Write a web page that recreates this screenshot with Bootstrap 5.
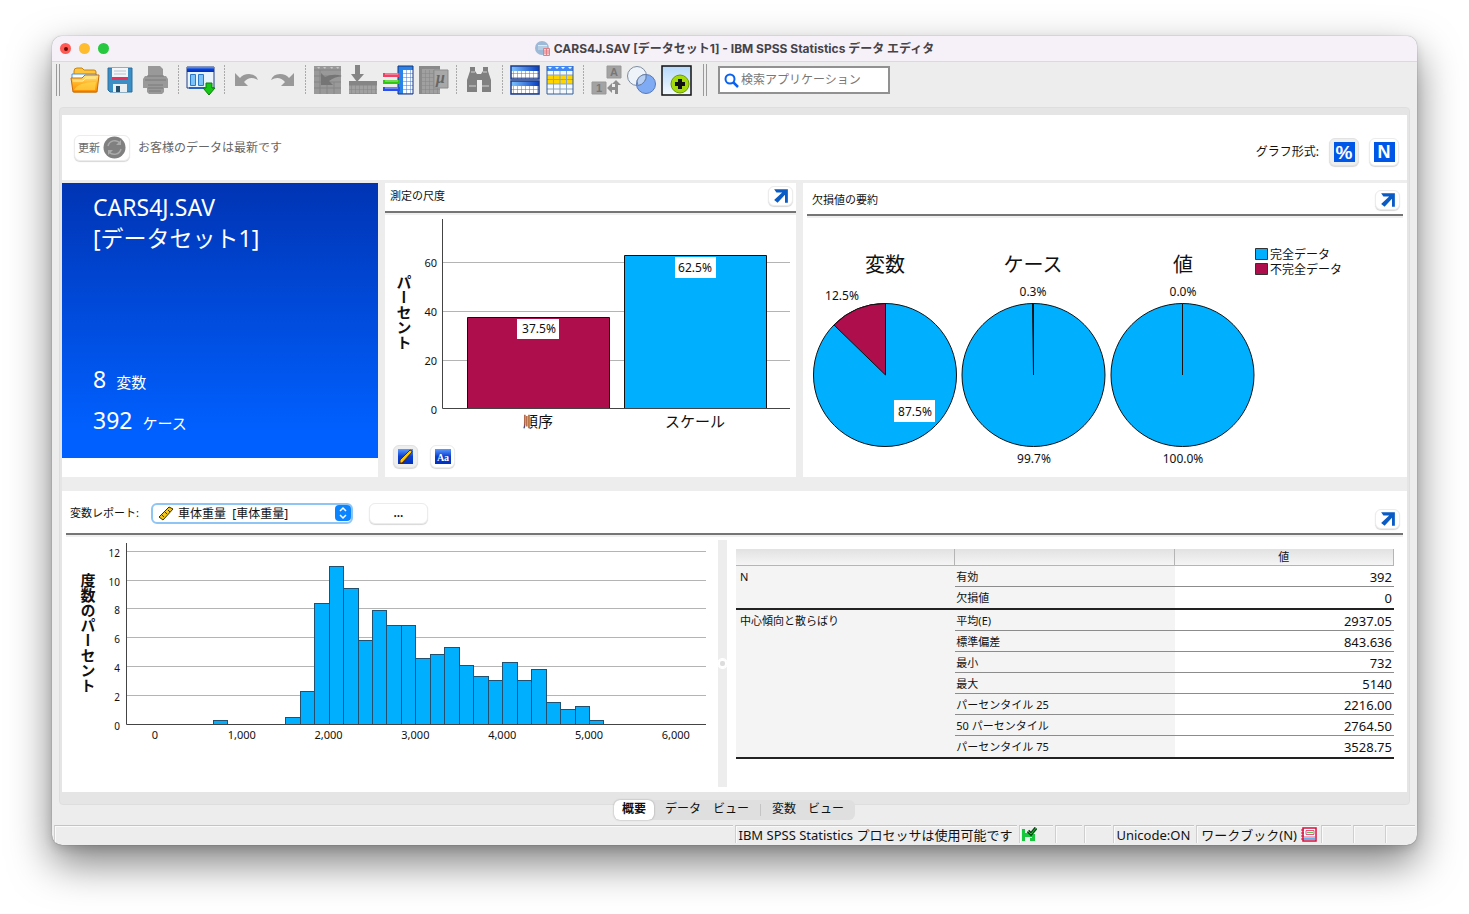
<!DOCTYPE html>
<html lang="ja">
<head>
<meta charset="utf-8">
<meta name="viewport" content="width=device-width, initial-scale=1">
<title>CARS4J.SAV [データセット1] - IBM SPSS Statistics データ エディタ</title>
<link href="https://cdn.jsdelivr.net/npm/bootstrap@5.3.0/dist/css/bootstrap.min.css" rel="stylesheet">
<style>
body { background: #fff; font-family: "Noto Sans", "Noto Sans CJK JP", sans-serif; font-size: 12px; line-height: 16px; color: #111; padding: 36px 52px 69px; min-height: 100vh; }
.app-window { min-height: calc(100vh - 105px); background: #ededed; border-radius: 10px; overflow: hidden; box-shadow: 0 0 1px rgba(0,0,0,.6), 0 18px 42px rgba(0,0,0,.5), 0 4px 10px rgba(0,0,0,.12); }
.title-bar { height: 26px; background: #f6f1f8; border-bottom: 1px solid #dcd8de; padding: 0 8px; font: bold 12px/24px Inter, "Noto Sans CJK JP", sans-serif; color: #464348; }
.light { width: 11px; height: 11px; border-radius: 50%; border: 0; padding: 0; margin-right: 8px; display: flex; align-items: center; justify-content: center; }
.light-close { background: #ff5b54; } .light-min { background: #febc2e; } .light-zoom { background: #28c840; }
.title-side { flex: 1 1 0; }
.tool-bar { height: 45px; gap: 3px; padding: 0 4px 9px; }
.tool-btn { width: 32px; height: 32px; border: 0; background: none; padding: 0; display: flex; align-items: center; justify-content: center; }
.tool-btn svg, .title-bar svg { display: block; }
.tool-sep { width: 8px; height: 30px; background: radial-gradient(#aaa, #aaa) center/1px 100% no-repeat; -webkit-mask: repeating-linear-gradient(#000 0 2px, transparent 2px 3px); }
.grip { width: 4px; height: 32px; border: solid #9a9a9a; border-width: 0 1px; }
.grip-start { margin-right: 6px; }
.search-box { width: 172px; height: 28px; border: 2px solid #919191; background: #fff; padding: 0 4px; gap: 2px; }
.search-box input { border: 0; outline: 0; padding: 0; width: 100%; font-size: 12px; background: none; }
.search-box input::placeholder { color: #777; opacity: 1; }
.pane { margin: 0 7px; padding: 7px 2px 12px; border: 1px solid #dedede; background: #e5e5e5; border-radius: 4px; }
.pane-inner { background: #ededed; }
.head-row { height: 65px; padding: 0 8px 0 12px; margin-bottom: 3px; }
.soft-btn { border: 1px solid #ececec; border-radius: 6px; background: #fff; box-shadow: 0 1px 1px rgba(0,0,0,.16); padding: 0; display: inline-flex; align-items: center; justify-content: center; color: #111; font-size: 12px; }
.soft-btn.active { background: #eee; border-color: #e2e2e2; }
.btn-refresh { width: 56px; height: 26px; gap: 3px; color: #6a6a6a; font-size: 11px; }
.btn-format { width: 30px; height: 28px; }
.btn-open { width: 25px; height: 20px; }
.btn-mini { width: 25px; height: 23px; }
.btn-more { width: 59px; height: 21px; font-weight: 600; }
.note { color: #666; }
.format-pair { gap: 10px; }
.top-grid { display: grid; grid-template-columns: 316fr 411fr 604fr; column-gap: 7px; margin-bottom: 14px; }
.blue-box { height: 275px; padding: 9px 31px 14px; color: #fff; background: linear-gradient(#0034b4, #0060ff 90%); }
.file-name { font-size: 23px; line-height: 31px; }
.count-row { font-size: 15px; line-height: 41px; height: 41px; }
.count-row span { font-size: 23px; line-height: 24px; margin-right: 10px; }
.panel-title { font-size: 11px; }
.rule { border-bottom: 2px solid #757575; box-shadow: 0 2px 0 #efefef; }
.measure-head { height: 30px; padding: 0 3px 2px 5px; }
.missing-head { height: 33px; margin: 0 4px; padding: 3px 3px 0 5px; }
.report-head { height: 44px; margin: 0 4px; padding: 2px 3px 0 4px; }
.open-report { margin: 12px 0 0 auto; }
.chart { display: block; width: 100%; height: auto; }
.chart text { fill: #111; }
.s11 { font-size: 11px; } .s12 { font-size: 12px; } .s15 { font-size: 15px; } .s20 { font-size: 20px; } .s10 { font-size: 10px; }
.mid { text-anchor: middle; } .fin { text-anchor: end; }
.axis-name { font-size: 15px; font-weight: 700; writing-mode: vertical-rl; font-family: "Noto Sans CJK JP", sans-serif; }
.var-select { width: 202px; height: 21px; border: 2px solid #8ec5f5; border-radius: 6px; background: #fff; padding: 0 0 0 5px; gap: 4px; }
.var-select select { appearance: none; border: 0; outline: 0; background: none; padding: 0; flex: 1; font-size: 12px; line-height: 17px; color: #111; }
.split-grid { display: grid; grid-template-columns: 656fr 9px 680fr; padding-top: 5px; }
.splitter { background: #ededed; height: 247px; display: flex; align-items: center; }
.splitter span { width: 9px; height: 9px; border: 2px solid #fff; background: #ddd; border-radius: 4px; outline: 1px solid #fff; }
.stat-table { width: calc(100% - 22px); margin: 9px 13px 0 9px; table-layout: fixed; font-size: 11px; line-height: 14px; border-collapse: separate; border-spacing: 0; }
.stat-table thead th { height: 17px; padding: 0; font-weight: 400; text-align: center; background: linear-gradient(#e2e2e2, #f5f5f5); border-bottom: 1px solid #b5b5b5; border-right: 1px solid #b5b5b5; }
.stat-table tbody th { background: #f4f4f4; font-weight: 400; vertical-align: top; padding: 4px 4px 0; }
.stat-table tbody th + th, .stat-table .sub { padding-left: 1px; }
.stat-table tbody td { text-align: right; padding: 4px 2px 0; vertical-align: top; font-size: 13px; }
.stat-table tbody tr { height: 21px; }
.stat-table tbody tr > * { border-bottom: 1px solid #8c8c8c; }
.stat-table tr.last-row { height: 23px; }
.stat-table tr.last-row > *, .stat-table th.grp { border-bottom: 2px solid #222; }
.view-tabs { margin-top: -5px; height: 20px; background: #dfdfdf; border-radius: 6px; position: relative; }
.view-tabs button { border: 0; background: none; padding: 0 11px; height: 20px; font-size: 12px; line-height: 18px; padding-bottom: 2px; color: #111; }
.view-tabs button.active { background: #fff; border-radius: 6px; padding: 0 8px 2px; font-weight: 700; box-shadow: 0 0 2px rgba(0,0,0,.35); }
.tab-line { width: 1px; height: 12px; background: #c4c4c4; }
.status-bar { margin: 5px 2px 1px; height: 19px; font-size: 13px; }
.stat-cell { border: solid #cfcfcf; border-width: 1px 0 0 1px; border-top-color: #c4c4c4; box-shadow: inset 1px 1px 0 #fafafa; margin-left: 2px; height: 18px; padding: 0 2px; white-space: nowrap; display: flex; align-items: center; gap: 4px; }
.cell-msg { padding-right: 5px; }
.w-30 { width: 30px; } .w-27 { width: 27px; } .w-34 { width: 34px; }
</style>
</head>
<body>
<svg width="0" height="0" class="position-absolute" aria-hidden="true">
  <defs>
    <linearGradient id="gBlue" x1="0" x2="1"><stop offset="0" stop-color="#7fc4ff"/><stop offset="1" stop-color="#0a3fc0"/></linearGradient>
    <linearGradient id="gFold" x2="0" y2="1"><stop offset="0" stop-color="#ffe98a"/><stop offset=".5" stop-color="#ffb224"/><stop offset="1" stop-color="#ff8a00"/></linearGradient>
    <linearGradient id="gSky" x2="0" y2="1"><stop offset="0" stop-color="#b5d8fa"/><stop offset="1" stop-color="#f4faff"/></linearGradient>
    <linearGradient id="gDeep" x2="0" y2="1"><stop offset="0" stop-color="#5d9bff"/><stop offset=".5" stop-color="#0a3fd0"/><stop offset="1" stop-color="#0030c0"/></linearGradient>
    <symbol id="iOpen" viewBox="0 0 14 14"><path d="M1 1h12v12h-2.500V6L4 13 1 10.500 8 4H3z" fill="#0a5bc4"/></symbol>
    <pattern id="pCell" width="4" height="4" patternUnits="userSpaceOnUse"><path d="M0 0h4v4" fill="none" stroke="#3a78d8"/></pattern>
    <pattern id="pGrey" width="4" height="4" patternUnits="userSpaceOnUse"><path d="M0 0h4v4" fill="none" stroke="#858585"/></pattern>
  </defs>
</svg>
<main class="app-window d-flex flex-column">
  <header class="title-bar d-flex align-items-center">
    <div class="title-side d-flex">
      <button class="light light-close" aria-label="閉じる"><svg width="4" height="4"><circle cx="2" cy="2" r="2" fill="#6d0a05"/></svg></button>
      <button class="light light-min" aria-label="しまう"></button>
      <button class="light light-zoom" aria-label="拡大"></button>
    </div>
    <div class="d-flex align-items-center gap-1 text-nowrap">
      <svg width="15" height="15" viewBox="0 0 15 15"><circle cx="7" cy="7" r="7" fill="#9cb9d8"/><path d="M3 4h9v5H3z" fill="#dce9f5"/><path d="M3 6h9M3 8h9" stroke="#8fb0d0"/><path d="M8.500 7.500h6v7h-6z" fill="#f9d3d3" stroke="#e07f86"/><path d="M9 10h5M9 12h5M11.500 8v6" stroke="#e07f86"/></svg>
      <span>CARS4J.SAV [データセット1] - IBM SPSS Statistics データ エディタ</span>
    </div>
    <div class="title-side"></div>
  </header>

  <div class="tool-bar d-flex align-items-center" role="toolbar" aria-label="ツールバー">
    <span class="grip grip-start"></span>
    <button class="tool-btn" aria-label="開く"><svg width="30" height="28" viewBox="0 0 30 28"><path d="M4 26V5q0-3 3-3h5l2 2h10q2 0 2 2v20z" fill="#fcc53d" stroke="#c98310"/><path d="M2 8h24v6H2z" fill="#fff" stroke="#4a90d9"/><path d="M1 12h11l3-3h14l-2 17H3z" fill="url(#gFold)" stroke="#c66c08"/><path d="M3 15h10l3-3h10" fill="none" stroke="#fff2a8"/><path d="M4 24q4-8 22-8l-1 8z" fill="#ffdf55" opacity=".6"/></svg></button>
    <button class="tool-btn" aria-label="保存"><svg width="26" height="26" viewBox="0 0 26 26"><path d="M1 1h24v24H3l-2-2z" fill="#3b8ec4" stroke="#2a6f9f"/><path d="M5 1h16v10H5z" fill="#f3f6f8"/><path d="M7 4h12M7 7h12" stroke="#b9c4cc"/><path d="M5 10h16v3H5z" fill="#e8325c"/><path d="M6 17h14v8H6z" fill="#e9eef1"/><path d="M9 19h4v6H9z" fill="#24506e"/></svg></button>
    <button class="tool-btn" aria-label="印刷" disabled><svg width="27" height="30" viewBox="0 0 27 30"><path d="M6 1h12l3 3v7h3l2 3v9h-4v4l-2 2H7l-2-2v-4H1v-9l2-3h3z" fill="#999"/><path d="M5 11h17M3 15h21M6 20h15M6 23h15M7 26h12" stroke="#7a7a7a"/></svg></button>
    <span class="tool-sep"></span>
    <button class="tool-btn" aria-label="ダイアログ呼び戻し"><svg width="30" height="29" viewBox="0 0 30 29"><path d="M1 1h27v21H1z" fill="#e9f3fd" stroke="#1c3f86"/><path d="M1 1h27v5H1z" fill="url(#gDeep)"/><path d="M4.500 8.500h5v11h-5zM12.500 8.500h5v11h-5z" fill="#7cc2f8" stroke="#2b78c8"/><path d="M3 22h16" stroke="#2b62c0" stroke-width="2"/><path d="M20 17h6v5h3l-6 7-6-7h3z" fill="#15c615" stroke="#0c7d0c"/></svg></button>
    <span class="tool-sep"></span>
    <button class="tool-btn" aria-label="元に戻す" disabled><svg width="26" height="16" viewBox="0 0 26 16"><path d="M1 1v13h13l-4-4q6-7 14-2-2-6-9-6-6 0-9 4z" fill="#999"/></svg></button>
    <button class="tool-btn" aria-label="やり直し" disabled><svg width="26" height="16" viewBox="0 0 26 16"><path d="M25 1v13H12l4-4Q10 3 2 8q2-6 9-6 6 0 9 4z" fill="#999"/></svg></button>
    <span class="tool-sep"></span>
    <button class="tool-btn" aria-label="ケースへ移動" disabled><svg width="30" height="30" viewBox="0 0 30 30"><path d="M1 1h27v28H1z" fill="#999"/><path d="M1 5h27M1 11h27M1 17h27M1 23h27M7 5v24M14 17v12M21 17v12" stroke="#858585"/><path d="M8 8v12h12l-4-4q5-4 13-5-9-3-17 1z" fill="#757575"/><path d="M4 2h3l-1 2zM10 2h3l-1 2zM17 2h3l-1 2zM23 2h3l-1 2z" fill="#c8c8c8"/></svg></button>
    <button class="tool-btn" aria-label="変数へ移動" disabled><svg width="30" height="30" viewBox="0 0 30 30"><path d="M7 0h5v9h4L9 17 3 9h4z" fill="#858585"/><path d="M1 16h28v13H1z" fill="#a0a0a0"/><path d="M1 16h28v4H1z" fill="#858585"/><path d="M1 20h28v9H1z" fill="url(#pGrey)"/></svg></button>
    <button class="tool-btn" aria-label="変数"><svg width="31" height="30" viewBox="0 0 31 30"><path d="M15 1h15v28H15z" fill="#fff"/><path d="M15 5h15v24H15z" fill="url(#pCell)"/><path d="M15 1h15v4H15zM15 5h5v24h-5z" fill="#2a83e6"/><path d="M15 1h15v28H15z" fill="none" stroke="#12337f"/><path d="M0 8h17v4H0z" fill="#ef4265"/><path d="M0 15h17v4H0z" fill="#2fc80f"/><path d="M0 22h17v4H0z" fill="#2b50ea"/><path d="M2 9h13M2 16h13M2 23h13" stroke="#fff" opacity=".6"/></svg></button>
    <button class="tool-btn" aria-label="記述統計" disabled><svg width="31" height="30" viewBox="0 0 31 30"><path d="M1 1h21v28H1z" fill="#a0a0a0"/><path d="M1 5h21v24H1z" fill="url(#pGrey)"/><path d="M1 1h21v3H1zM1 4h3v25H1z" fill="#8a8a8a"/><path d="M16 5h14v18H16z" fill="#a8a8a8" stroke="#8d8d8d"/><text x="18" y="18" font-size="16" font-style="italic" font-weight="bold" font-family="Liberation Serif, serif" fill="#666">μ</text></svg></button>
    <span class="tool-sep"></span>
    <button class="tool-btn" aria-label="検索" disabled><svg width="26" height="28" viewBox="0 0 26 28"><path d="M4 1h5v4l2 3h4l2-3V1h5v4l3 9v12h-9V14h-5v12H1V14l3-9z" fill="#808080"/><path d="M3 20h7M16 20h7M5 6h4M17 6h4" stroke="#a9a9a9" stroke-width="2"/></svg></button>
    <span class="tool-sep"></span>
    <button class="tool-btn" aria-label="ケースの分割"><svg width="30" height="30" viewBox="0 0 30 30"><path d="M1 1h28v13H1zM1 16h28v13H1z" fill="#fff"/><path d="M1 6h28v8H1zM1 21h28v8H1z" fill="url(#pCell)"/><path d="M1 1h28v5H1zM1 16h28v5H1z" fill="url(#gBlue)"/><path d="M1 1h28v13H1zM1 16h28v13H1z" fill="none" stroke="#183b8e" stroke-width="1.500"/></svg></button>
    <button class="tool-btn" aria-label="ケースの選択"><svg width="28" height="30" viewBox="0 0 28 30"><path d="M1 1h26v28H1z" fill="#f5f9fd"/><path d="M1 1h26v5H1z" fill="#4288f2"/><path d="M1 10h26v9H1z" fill="#ffd500"/><path d="M7.500 6v23M14 6v23M20.500 6v23M1 14.500h26M1 10h26M1 19h26M1 24h26" stroke="#8aa5bd"/><path d="M2 2h4l-2 2zM9 2h4l-2 2zM15 2h4l-2 2zM22 2h4l-2 2z" fill="#fff"/><path d="M1 1v28h26V1" fill="none" stroke="#315d9c"/></svg></button>
    <span class="tool-sep"></span>
    <button class="tool-btn" aria-label="値ラベル" disabled><svg width="31" height="30" viewBox="0 0 31 30"><path d="M16 1h14v12H16zM1 17h14v12H1z" fill="#a3a3a3" stroke="#999"/><g font-size="11" font-weight="bold" font-family="Liberation Sans, sans-serif" fill="#777"><text x="19" y="11">A</text><text x="5" y="27">1</text></g><path d="M16 23l5-5v4h3v-3h-3l4-4 5 5h-3v9h-3v-4h-3v3z" fill="#8e8e8e"/></svg></button>
    <button class="tool-btn" aria-label="変数セット"><svg width="31" height="30" viewBox="0 0 31 30"><circle cx="11" cy="11" r="9.500" fill="#eef3fa" stroke="#7f8da0"/><circle cx="20" cy="19" r="9.500" fill="#6a9ff5" fill-opacity=".85" stroke="#5878b8"/><path d="M11 16a9.500 9.500 0 0 1 9-6.500 9.500 9.500 0 0 1-8 11z" fill="#b8d0f4" stroke="#6c7f9c"/></svg></button>
    <button class="tool-btn" aria-label="ツールバーのカスタマイズ"><svg width="31" height="31" viewBox="0 0 31 31"><path d="M1 1h29v29H1z" fill="url(#gSky)" stroke="#111" stroke-width="1.500"/><circle cx="19" cy="19" r="9" fill="#a4d90c" stroke="#6c9a00"/><path d="M17 14h4v3h3v4h-3v3h-4v-3h-3v-4h3z" fill="#111"/></svg></button>
    <span class="grip mx-2"></span>
    <div class="search-box d-flex align-items-center">
      <svg width="15" height="15" viewBox="0 0 15 15" class="flex-shrink-0"><circle cx="6" cy="6" r="4.500" fill="none" stroke="#0a62ee" stroke-width="2"/><path d="M9 9l5 5" stroke="#0a62ee" stroke-width="2.500"/></svg>
      <input type="search" placeholder="検索アプリケーション" aria-label="検索アプリケーション">
    </div>
  </div>

  <div class="pane flex-grow-1 d-flex flex-column">
    <div class="pane-inner flex-grow-1 d-flex flex-column">
      <div class="head-row bg-white d-flex align-items-center justify-content-between">
        <div class="d-flex align-items-center gap-2">
          <button class="soft-btn btn-refresh" disabled>更新 <svg width="23" height="23" viewBox="0 0 23 23"><circle cx="11.500" cy="11.500" r="11" fill="#808080"/><path d="M5 10a7 7 0 0 1 12-3M18 13a7 7 0 0 1-12 3" fill="none" stroke="#aaa" stroke-width="1.500"/><path d="M18 4v5h-5zM5 19v-5h5z" fill="#aaa"/></svg></button>
          <span class="note">お客様のデータは最新です</span>
        </div>
        <div class="d-flex align-items-center pt-2 format-pair">
          <span>グラフ形式:</span>
          <button class="soft-btn btn-format active" aria-label="パーセント"><svg width="21" height="20"><path d="M0 0h21v20H0z" fill="#0057e7"/><text x="10" y="17" class="mid" font-size="19" font-weight="bold" font-family="Liberation Sans, sans-serif" fill="#fff">%</text></svg></button>
          <button class="soft-btn btn-format" aria-label="度数"><svg width="21" height="20"><path d="M0 0h21v20H0z" fill="#0057e7"/><text x="10" y="16" class="mid" font-size="18" font-weight="bold" font-family="Liberation Sans, sans-serif" fill="#fff">N</text></svg></button>
        </div>
      </div>

      <div class="top-grid">
        <section class="bg-white">
          <div class="blue-box d-flex flex-column justify-content-between">
            <div class="file-name">CARS4J.SAV<br>[データセット1]</div>
            <div>
              <div class="count-row"><span>8</span>変数</div>
              <div class="count-row"><span>392</span>ケース</div>
            </div>
          </div>
        </section>

        <section class="bg-white">
          <div class="measure-head rule d-flex align-items-center justify-content-between">
            <span class="panel-title">測定の尺度</span>
            <button class="soft-btn btn-open" aria-label="測定の尺度を開く"><svg width="16" height="16"><use href="#iOpen"/></svg></button>
          </div>
          <svg class="chart" viewBox="0 -2 411 232" role="img" aria-label="測定の尺度">
            <path d="M57 47.500H405M57 96.500H405M57 145.500H405" stroke="#b4b4b4"/>
            <path d="M82.500 102.500h142v91h-142z" fill="#ae0e4c" stroke="#111"/>
            <path d="M239.500 40.500h142v153h-142z" fill="#00b0ff" stroke="#111"/>
            <path d="M57.500 4v189.500H405" fill="none" stroke="#444"/>
            <path d="M132 104h42v20h-42zM290 42h41v21h-41z" fill="#fff"/>
            <g class="s12 mid"><text x="154" y="118">37.5%</text><text x="310" y="57">62.5%</text></g>
            <g class="s11 fin"><text x="52" y="52">60</text><text x="52" y="101">40</text><text x="52" y="150">20</text><text x="52" y="199">0</text></g>
            <g class="s15 mid"><text x="153" y="212">順序</text><text x="310" y="212">スケール</text></g>
            <text class="axis-name" x="19" y="60">パーセント</text>
          </svg>
          <div class="d-flex px-2 gap-2">
            <button class="soft-btn btn-mini active me-1" aria-label="尺度"><svg width="15" height="15"><path d="M0 0h15v15H0z" fill="url(#gDeep)"/><path d="M2 11L12 1l2 1v1L4 14H2z" fill="#ffc800" stroke="#5a2a00"/></svg></button>
            <button class="soft-btn btn-mini" aria-label="ラベル"><svg width="16" height="15"><path d="M0 0h16v15H0z" fill="url(#gDeep)"/><text x="8" y="12" class="mid" font-size="10" font-weight="bold" font-family="Liberation Serif, serif" fill="#fff">Aa</text></svg></button>
          </div>
        </section>

        <section class="bg-white">
          <div class="missing-head rule d-flex align-items-center justify-content-between">
            <span class="panel-title">欠損値の要約</span>
            <button class="soft-btn btn-open" aria-label="欠損値の要約を開く"><svg width="16" height="16"><use href="#iOpen"/></svg></button>
          </div>
          <svg class="chart" viewBox="0 0 604 261" role="img" aria-label="欠損値の要約">
            <g fill="#00b0ff" stroke="#111"><circle cx="82" cy="159" r="71.500"/><circle cx="230.500" cy="159" r="71.500"/><circle cx="379.500" cy="159" r="71.500"/></g>
            <path d="M82.500 159V87.500A71.500 71.500 0 0 0 31 109z" fill="#ae0e4c" stroke="#111"/>
            <path d="M230.500 159V87.500l-1 0zM379.500 159V87.500" stroke="#111"/>
            <path d="M91 184h41v22H91z" fill="#fff"/>
            <g class="s20 mid"><text x="82" y="56">変数</text><text x="230" y="56">ケース</text><text x="380" y="56">値</text></g>
            <g class="s12 mid"><text x="39" y="84">12.5%</text><text x="230" y="80">0.3%</text><text x="380" y="80">0.0%</text><text x="112" y="200">87.5%</text><text x="231" y="247">99.7%</text><text x="380" y="247">100.0%</text></g>
            <g stroke="#333"><path d="M452.500 32.500h12v11h-12z" fill="#00b0ff"/><path d="M452.500 47.500h12v11h-12z" fill="#ae0e4c"/></g>
            <g class="s12"><text x="467" y="43">完全データ</text><text x="467" y="58">不完全データ</text></g>
          </svg>
        </section>
      </div>

      <section class="bg-white flex-grow-1">
        <div class="report-head rule d-flex align-items-center">
          <label class="panel-title me-2" for="varPick">変数レポート:</label>
          <div class="var-select d-flex align-items-center ms-1 me-3">
            <svg width="16" height="15" viewBox="0 0 16 15"><path d="M1 11L11 1l4 2L5 14z" fill="#f0c419" stroke="#3b3000"/><path d="M4 9l2 2M7 6l2 2M10 4l2 2" stroke="#3b3000"/></svg>
            <select id="varPick"><option>車体重量&nbsp; [車体重量]</option></select>
            <svg width="16" height="16" viewBox="0 0 16 16"><rect width="16" height="16" rx="4" fill="#0a84ff"/><path d="M5 6l3-3 3 3M5 10l3 3 3-3" fill="none" stroke="#fff" stroke-width="1.500"/></svg>
          </div>
          <button class="soft-btn btn-more">...</button>
          <button class="soft-btn btn-open open-report" aria-label="変数レポートを開く"><svg width="16" height="16"><use href="#iOpen"/></svg></button>
        </div>
        <div class="split-grid">
          <svg class="chart" viewBox="0 0 656 210" role="img" aria-label="度数のパーセント">
            <g id="histGrid" stroke="#b4b4b4"></g>
            <g id="histBars" fill="#00b0ff" stroke="#22506e"></g>
            <path d="M64.500 3v181.500H644" fill="none" stroke="#444"/>
            <g id="histY" class="s10 fin"></g>
            <g id="histX" class="s11 mid"></g>
            <text class="axis-name" x="26" y="33">度数のパーセント</text>
          </svg>
          <div class="splitter"><span></span></div>
          <div>
            <table class="stat-table">
              <thead><tr><th></th><th></th><th>値</th></tr></thead>
              <tbody>
                <tr><th rowspan="2" class="grp">N</th><th>有効</th><td>392</td></tr>
                <tr class="last-row"><th class="sub">欠損値</th><td>0</td></tr>
                <tr><th rowspan="7" class="grp">中心傾向と散らばり</th><th>平均(E)</th><td>2937.05</td></tr>
                <tr><th class="sub">標準偏差</th><td>843.636</td></tr>
                <tr><th class="sub">最小</th><td>732</td></tr>
                <tr><th class="sub">最大</th><td>5140</td></tr>
                <tr><th class="sub">パーセンタイル 25</th><td>2216.00</td></tr>
                <tr><th class="sub">50 パーセンタイル</th><td>2764.50</td></tr>
                <tr class="last-row"><th class="sub">パーセンタイル 75</th><td>3528.75</td></tr>
              </tbody>
            </table>
          </div>
        </div>
      </section>
    </div>
  </div>

  <nav class="view-tabs d-flex align-items-center align-self-center" aria-label="ビュー">
    <button class="active">概要</button>
    <button>データ　ビュー</button>
    <span class="tab-line"></span>
    <button>変数　ビュー</button>
  </nav>

  <footer class="status-bar d-flex">
    <div class="stat-cell flex-grow-1 ms-0"></div>
    <div class="stat-cell cell-msg">IBM SPSS Statistics プロセッサは使用可能です</div>
    <div class="stat-cell w-34"><svg width="15" height="15" viewBox="0 0 15 15"><path d="M0 2h3v12H0zM10 7h3v7h-3zM3 6h7v4H3z" fill="#18c83c"/><path d="M3 2h6v4H3zM4 10h6v4H4z" fill="#eee"/><path d="M8 11h2v3H8z" fill="#18c83c"/><path d="M6 4l3 3 5-6" fill="none" stroke="#064d10" stroke-width="3.500"/><path d="M6 4l3 3 5-6" fill="none" stroke="#18c83c"/></svg></div>
    <div class="stat-cell w-27"></div>
    <div class="stat-cell w-27"></div>
    <div class="stat-cell pe-1">Unicode:ON</div>
    <div class="stat-cell ps-1">ワークブック(N) <svg width="16" height="15" viewBox="0 0 16 15"><path d="M2 1h13v13H2z" fill="#fff" stroke="#d80f3c" stroke-width="1.500"/><path d="M5 3.500h8v4H5z" fill="#eef" stroke="#e0547a"/><path d="M6 5.500h6" stroke="#5fbf5f"/><path d="M3 10h11" stroke="#e0547a"/><path d="M3 11h11v2H3z" fill="#6ab0ea"/><path d="M0 3h3M0 6h3M0 9h3M0 12h3" stroke="#d80f3c"/></svg></div>
    <div class="stat-cell w-30"></div>
    <div class="stat-cell w-30"></div>
    <div class="stat-cell w-30"></div>
  </footer>
</main>
<script src="https://cdn.jsdelivr.net/npm/bootstrap@5.3.0/dist/js/bootstrap.bundle.min.js"></script>
<script>
// Histogram of 392 cases; each bin is a sixth of 1,000 wide, starting at zero.
const counts = { 4: 1, 9: 2, 10: 9, 11: 33, 12: 43, 13: 37, 14: 23, 15: 31, 16: 27, 17: 27, 18: 18, 19: 19, 20: 21, 21: 16, 22: 13, 23: 12, 24: 17, 25: 12, 26: 15, 27: 6, 28: 4, 29: 5, 30: 1 };
const base = 184.5, unitY = 14.4, zeroX = 93, unitX = 86.8;
const make = (parent, tag, attrs, label) => {
  const el = document.createElementNS('http://www.w3.org/2000/svg', tag);
  for (const k in attrs) el.setAttribute(k, attrs[k]);
  if (label !== undefined) el.textContent = label;
  document.getElementById(parent).appendChild(el);
};
for (let v = 0; v <= 12; v += 2) {
  const y = Math.round(base - v * unitY) - 0.5;
  if (v) make('histGrid', 'line', { x1: 65, x2: 644, y1: y, y2: y });
  make('histY', 'text', { x: 58, y: y + 5 }, v);
}
for (let k = 0; k <= 6; k++) make('histX', 'text', { x: zeroX + k * unitX, y: 199 }, k ? k + ',000' : '0');
for (const k in counts) {
  const x = Math.round(zeroX + k * unitX / 6) + 0.5, x2 = Math.round(zeroX + (+k + 1) * unitX / 6) + 0.5;
  const h = Math.round(counts[k] / 3.92 * unitY);
  make('histBars', 'rect', { x, y: base - h, width: x2 - x, height: h });
}
</script>
</body>
</html>
